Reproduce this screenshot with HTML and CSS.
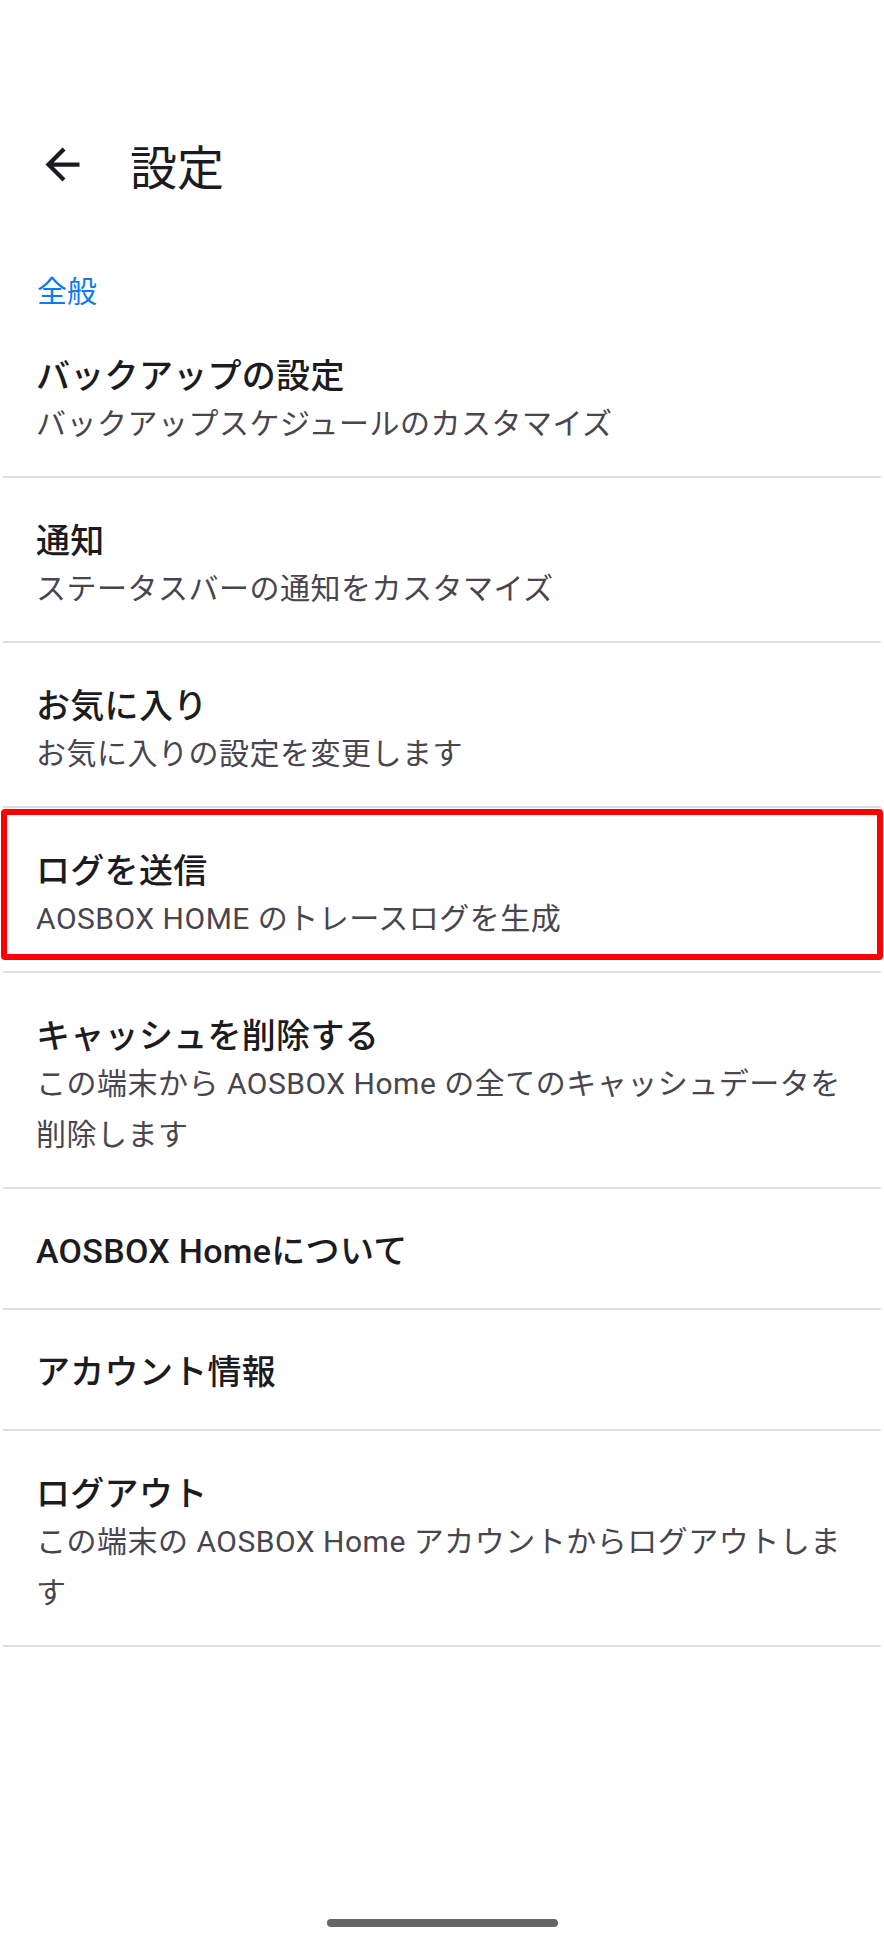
FILE: index.html
```html
<!DOCTYPE html>
<html lang="ja">
<head>
<meta charset="utf-8">
<title>設定</title>
<link rel="stylesheet" href="styles.css">
</head>
<body>
<div class="page">
  <header class="toolbar">
    <button class="back" aria-label="戻る">
      <svg class="back-icon" viewBox="0 0 24 24"><path d="M20 11H7.83l5.59-5.59L12 4l-8 8 8 8 1.41-1.41L7.83 13H20v-2z"/></svg>
    </button>
    <h1 class="title">設定</h1>
  </header>

  <div class="category">全般</div>

  <ul class="prefs">
    <li class="pref">
      <div class="pref-title">バックアップの設定</div>
      <div class="pref-summary">バックアップスケジュールのカスタマイズ</div>
    </li>
    <li class="pref">
      <div class="pref-title">通知</div>
      <div class="pref-summary">ステータスバーの通知をカスタマイズ</div>
    </li>
    <li class="pref">
      <div class="pref-title">お気に入り</div>
      <div class="pref-summary">お気に入りの設定を変更します</div>
    </li>
    <li class="pref">
      <div class="pref-title">ログを送信</div>
      <div class="pref-summary">AOSBOX HOME のトレースログを生成</div>
      <span class="mark"></span>
    </li>
    <li class="pref">
      <div class="pref-title">キャッシュを削除する</div>
      <div class="pref-summary">この端末から AOSBOX Home の全てのキャッシュデータを削除します</div>
    </li>
    <li class="pref pref--single">
      <div class="pref-title">AOSBOX Homeについて</div>
    </li>
    <li class="pref pref--single">
      <div class="pref-title">アカウント情報</div>
    </li>
    <li class="pref">
      <div class="pref-title">ログアウト</div>
      <div class="pref-summary">この端末の AOSBOX Home アカウントからログアウトします</div>
    </li>
  </ul>

  <div class="navbar"><div class="handle"></div></div>
</div>
</body>
</html>
```

FILE: styles.css
```css
html, body {
  margin: 0;
  padding: 0;
  background: #ffffff;
}

body {
  font-family: Roboto, "Noto Sans CJK JP", sans-serif;
  color: #1c1b1f;
}

.page {
  width: 884px;
  height: 1949px;
  display: flex;
  flex-direction: column;
}

.toolbar {
  margin-top: 105px;
  height: 118px;
  display: flex;
  align-items: center;
  padding-left: 37px;
}

.back {
  width: 51px;
  height: 51px;
  padding: 0;
  border: 0;
  background: none;
  display: flex;
}

.back-icon {
  width: 51px;
  height: 51px;
  fill: #1c1b1f;
}

.title {
  margin: 0 0 0 42px;
  padding-top: 10px;
  font-size: 47px;
  line-height: 56px;
  font-weight: 400;
  color: #1c1b1f;
}

.category {
  margin-top: 49px;
  padding-left: 37px;
  font-size: 30px;
  line-height: 40px;
  font-weight: 400;
  color: #0b7bf5;
}

.prefs {
  list-style: none;
  margin: 1px 3px 0;
  padding: 0;
}

.pref {
  position: relative;
  padding: 42px 28px 27px 33px;
  border-bottom: 2px solid #e0e0e0;
}

.pref--single {
  padding-top: 41px;
  padding-bottom: 35px;
}

.pref-title {
  font-size: 34px;
  line-height: 43px;
  font-weight: 500;
  letter-spacing: 0.3px;
  color: #1c1b1f;
}

.pref-summary {
  font-size: 30px;
  line-height: 51px;
  letter-spacing: 0.5px;
  color: #49454f;
}

.mark {
  position: absolute;
  top: 1px;
  left: -2px;
  right: -2px;
  bottom: 11px;
  border: 6px solid #ff0000;
  border-radius: 4px;
  pointer-events: none;
}

.navbar {
  margin-top: auto;
  display: flex;
  justify-content: center;
  padding-bottom: 22px;
}

.handle {
  width: 231px;
  height: 8px;
  border-radius: 4px;
  background: #666666;
}
```
